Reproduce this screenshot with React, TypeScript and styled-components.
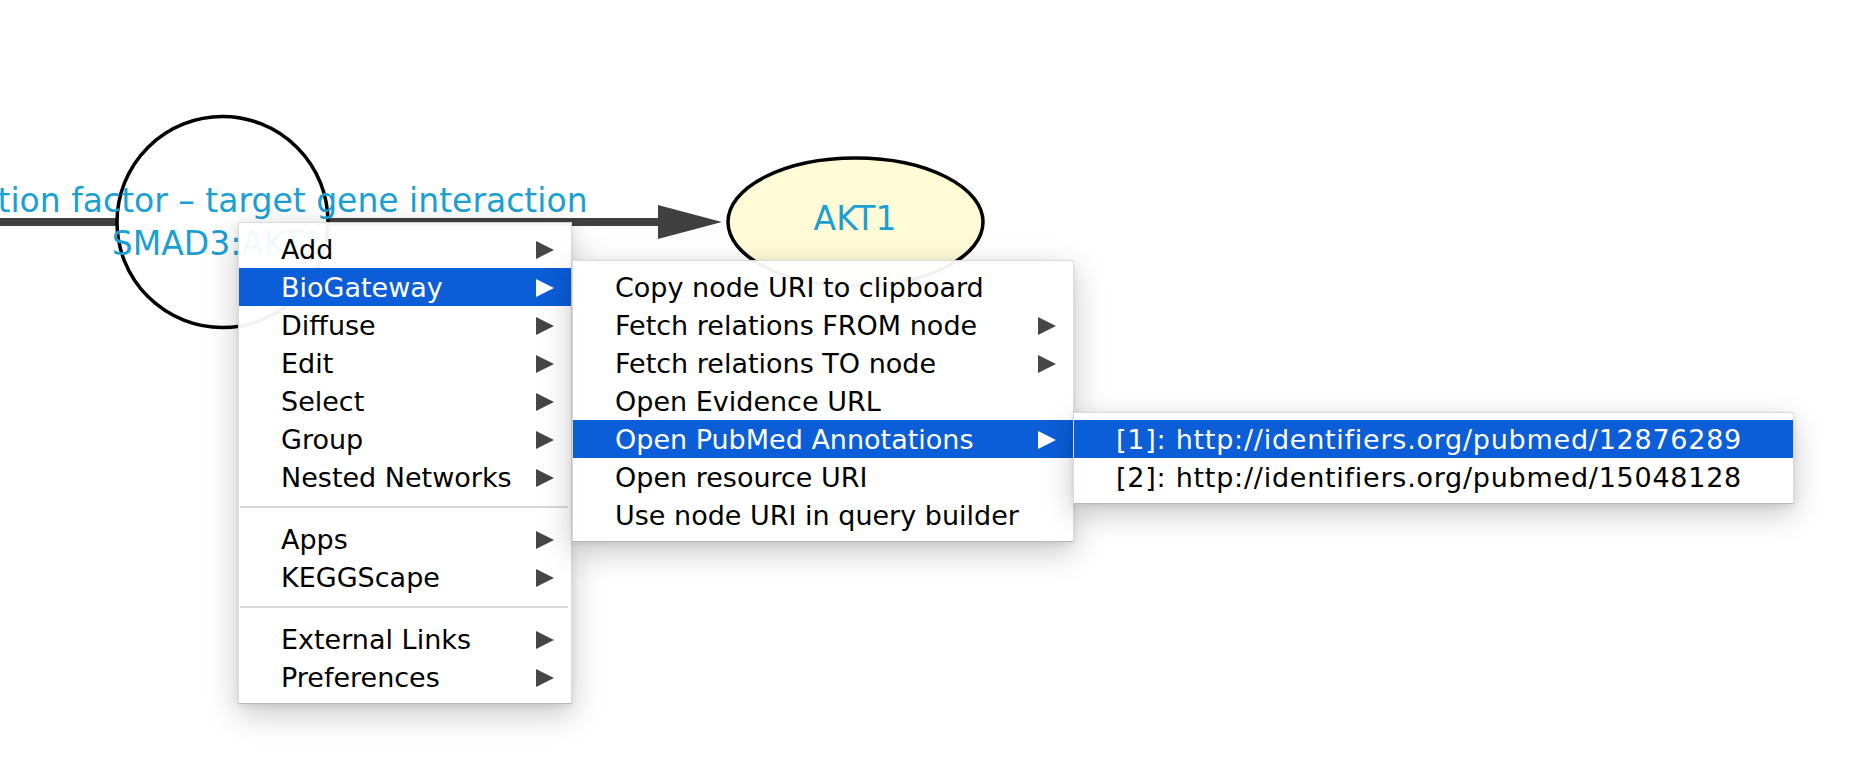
import React from "react";
import styled, { createGlobalStyle } from "styled-components";

const GlobalStyle = createGlobalStyle`
  html, body {
    margin: 0;
    padding: 0;
    background: #ffffff;
  }
  body {
    font-family: "DejaVu Sans", "Liberation Sans", sans-serif;
  }
`;

const Canvas = styled.div`
  position: relative;
  width: 1860px;
  height: 766px;
  overflow: hidden;
  background: #ffffff;
`;

const Network = styled.svg`
  position: absolute;
  left: 0;
  top: 0;
  width: 1860px;
  height: 766px;
`;

const NodeLabel = styled.div<{ $x: number; $y: number }>`
  position: absolute;
  left: ${(p) => p.$x}px;
  top: ${(p) => p.$y}px;
  transform: translateX(-50%);
  white-space: nowrap;
  text-align: center;
  font-family: "DejaVu Sans", "Liberation Sans", sans-serif;
  font-size: 33px;
  line-height: 43px;
  color: #1c9fd2;
`;

const Menu = styled.div<{ $left: number; $top: number; $width: number; $spacing?: number }>`
  position: absolute;
  left: ${(p) => p.$left}px;
  top: ${(p) => p.$top}px;
  width: ${(p) => p.$width}px;
  box-sizing: border-box;
  display: flex;
  flex-direction: column;
  padding: 7px 0;
  background: rgba(255, 255, 255, 0.95);
  border: 1px solid rgba(0, 0, 0, 0.14);
  border-bottom-color: rgba(0, 0, 0, 0.28);
  box-shadow: 0 10px 30px rgba(0, 0, 0, 0.22), 0 2px 6px rgba(0, 0, 0, 0.08);
  font-family: "DejaVu Sans", "Liberation Sans", sans-serif;
  font-size: 27px;
  letter-spacing: ${(p) => p.$spacing ?? 0}px;
  color: #000000;
`;

const Item = styled.div<{ $active?: boolean }>`
  height: 38px;
  display: flex;
  align-items: center;
  justify-content: space-between;
  padding: 0 17px 0 42px;
  white-space: nowrap;
  background: ${(p) => (p.$active ? "#0b5dd8" : "transparent")};
  color: ${(p) => (p.$active ? "#ffffff" : "#000000")};
`;

const ItemText = styled.span`
  display: block;
`;

const Separator = styled.div`
  height: 2px;
  margin: 10px 3px 12px 1px;
  background: #d8d8d8;
`;

const ArrowIcon = styled.svg`
  width: 18px;
  height: 18px;
  flex: none;
  margin-top: 2px;
`;

const SubArrow: React.FC<{ active?: boolean }> = ({ active }) => (
  <ArrowIcon viewBox="0 0 18 18">
    <polygon points="0,0 18,9 0,18" fill={active ? "#ffffff" : "#464646"} />
  </ArrowIcon>
);

type Entry = { label?: string; sub?: boolean; active?: boolean; sep?: boolean };

const mainItems: Entry[] = [
  { label: "Add", sub: true },
  { label: "BioGateway", sub: true, active: true },
  { label: "Diffuse", sub: true },
  { label: "Edit", sub: true },
  { label: "Select", sub: true },
  { label: "Group", sub: true },
  { label: "Nested Networks", sub: true },
  { sep: true },
  { label: "Apps", sub: true },
  { label: "KEGGScape", sub: true },
  { sep: true },
  { label: "External Links", sub: true },
  { label: "Preferences", sub: true },
];

const bioItems: Entry[] = [
  { label: "Copy node URI to clipboard" },
  { label: "Fetch relations FROM node", sub: true },
  { label: "Fetch relations TO node", sub: true },
  { label: "Open Evidence URL" },
  { label: "Open PubMed Annotations", sub: true, active: true },
  { label: "Open resource URI" },
  { label: "Use node URI in query builder" },
];

const pubmedItems: Entry[] = [
  { label: "[1]: http://identifiers.org/pubmed/12876289", active: true },
  { label: "[2]: http://identifiers.org/pubmed/15048128" },
];

const MenuEntries: React.FC<{ items: Entry[] }> = ({ items }) => (
  <>
    {items.map((it, i) =>
      it.sep ? (
        <Separator key={i} />
      ) : (
        <Item key={i} $active={it.active}>
          <ItemText>{it.label}</ItemText>
          {it.sub && <SubArrow active={it.active} />}
        </Item>
      )
    )}
  </>
);

export default function App() {
  return (
    <>
      <GlobalStyle />
      <Canvas>
        <Network viewBox="0 0 1860 766">
          <rect x="0" y="218" width="662" height="8" fill="#404040" />
          <polygon points="658,205 722,222 658,239" fill="#404040" />
          <circle cx="222.5" cy="222" r="105.5" fill="#ffffff" stroke="#000000" strokeWidth="3.5" />
          <ellipse cx="855.5" cy="222" rx="127.5" ry="64" fill="#fefbd6" stroke="#000000" strokeWidth="3.5" />
        </Network>
        <NodeLabel $x={855} $y={197}>AKT1</NodeLabel>
        <NodeLabel $x={218} $y={179}>
          Transcription factor – target gene interaction
          <br />
          SMAD3:AKT1
        </NodeLabel>

        <Menu $left={238} $top={222} $width={334}>
          <MenuEntries items={mainItems} />
        </Menu>
        <Menu $left={572} $top={260} $width={502}>
          <MenuEntries items={bioItems} />
        </Menu>
        <Menu $left={1073} $top={412} $width={721} $spacing={0.75}>
          <MenuEntries items={pubmedItems} />
        </Menu>
      </Canvas>
    </>
  );
}
